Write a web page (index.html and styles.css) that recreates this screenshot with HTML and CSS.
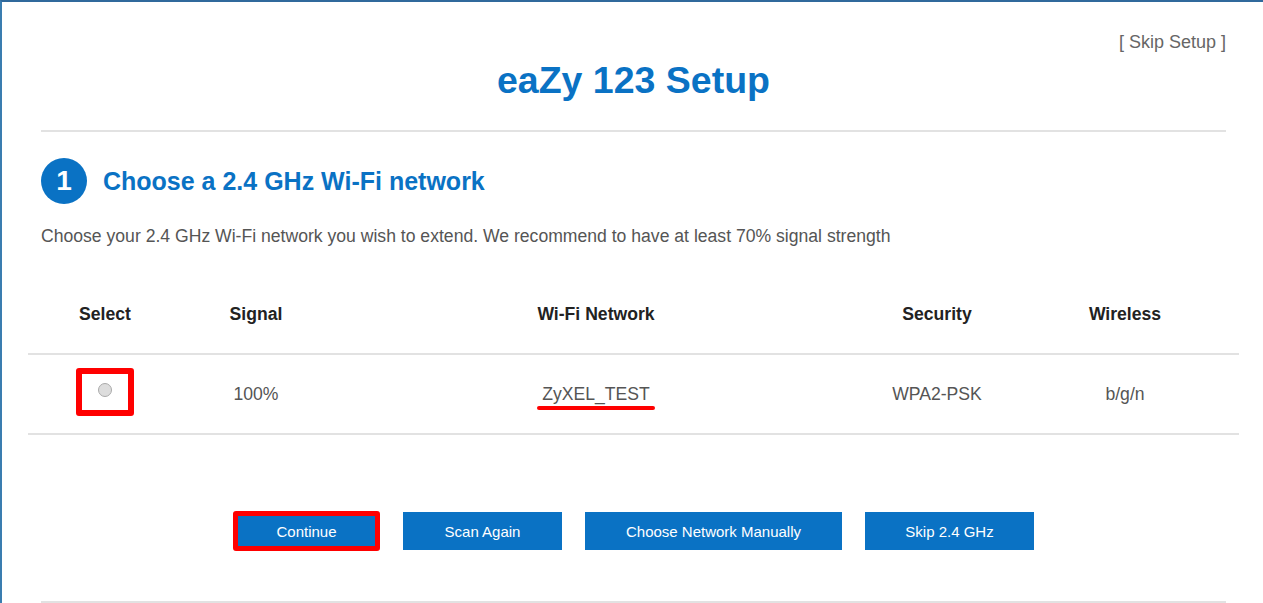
FILE: index.html
```html
<!DOCTYPE html>
<html>
<head>
  <title>eaZy 123 Setup</title>
  <link rel="stylesheet" href="styles.css">
</head>
<body>
  <div class="frame">
    <div class="skip-link">[ Skip Setup ]</div>
    <h1 class="title">eaZy 123 Setup</h1>
    <div class="divider"></div>

    <div class="step">
      <span class="step-num">1</span>
      <h2 class="step-title">Choose a 2.4 GHz Wi-Fi network</h2>
    </div>
    <p class="hint">Choose your 2.4 GHz Wi-Fi network you wish to extend. We recommend to have at least 70% signal strength</p>

    <div class="net-table">
      <div class="net-row net-head">
        <div>Select</div>
        <div>Signal</div>
        <div>Wi-Fi Network</div>
        <div>Security</div>
        <div>Wireless</div>
      </div>
      <div class="net-row">
        <div><span class="mark-box"><span class="radio"></span></span></div>
        <div>100%</div>
        <div><span class="ssid">ZyXEL_TEST</span></div>
        <div>WPA2-PSK</div>
        <div>b/g/n</div>
      </div>
    </div>

    <div class="actions">
      <button class="btn btn-marked">Continue</button>
      <button class="btn btn-scan">Scan Again</button>
      <button class="btn btn-manual">Choose Network Manually</button>
      <button class="btn btn-skip">Skip 2.4 GHz</button>
    </div>
    <div class="divider bottom"></div>
  </div>
</body>
</html>
```

FILE: styles.css
```css
body {
  margin: 0;
  font-family: "Liberation Sans", Arial, sans-serif;
  background: #fff;
  overflow: hidden;
}
.frame {
  border-top: 2px solid #30699c;
  border-left: 2px solid #3a7db0;
  height: 601px;
  padding: 0 37px 0 39px;
}
.skip-link {
  text-align: right;
  color: #666;
  font-size: 18px;
  line-height: 20px;
  padding-top: 30px;
}
.title {
  margin: 7px 0 0;
  text-align: center;
  color: #0a72c4;
  font-size: 37.5px;
  line-height: 42px;
  font-weight: bold;
}
.divider {
  height: 2px;
  background: #e2e2e2;
  margin-top: 29px;
}
.divider.bottom {
  margin-top: 50px;
}
.step {
  display: flex;
  align-items: center;
  gap: 16px;
  margin-top: 26px;
}
.step-num {
  width: 46px;
  height: 46px;
  border-radius: 50%;
  background: #0a72c4;
  color: #fff;
  font-size: 28px;
  font-weight: bold;
  display: flex;
  align-items: center;
  justify-content: center;
}
.step-title {
  margin: 0;
  color: #0a72c4;
  font-size: 25px;
  font-weight: bold;
}
.hint {
  margin: 22px 0 0;
  color: #555;
  font-size: 17.6px;
  line-height: 20px;
}
.net-table {
  margin: 29px -13px 0;
}
.net-row {
  display: grid;
  grid-template-columns: 154px 148px 532px 150px 226px;
  align-items: center;
  height: 78px;
  border-bottom: 2px solid #e2e2e2;
  text-align: center;
  color: #555;
  font-size: 17.6px;
}
.net-head {
  color: #222;
  font-weight: bold;
}
.mark-box {
  display: inline-flex;
  align-items: center;
  justify-content: center;
  width: 58px;
  height: 48px;
  box-sizing: border-box;
  border: 6px solid #f00;
  border-radius: 3px;
  margin-top: -4px;
}
.radio {
  width: 12px;
  height: 12px;
  border-radius: 50%;
  border: 1px solid #aaa;
  background: #ddd;
  margin-top: -4px;
}
.ssid {
  position: relative;
  padding: 0 5px;
}
.ssid::after {
  content: "";
  position: absolute;
  left: 0;
  right: 0;
  bottom: -6px;
  height: 4px;
  border-radius: 2px;
  background: #f00;
}
.actions {
  display: flex;
  justify-content: center;
  align-items: center;
  gap: 23px;
  margin-top: 76px;
}
.btn {
  height: 38px;
  border: 0;
  background: #0a72c4;
  color: #fff;
  font-family: "Liberation Sans", Arial, sans-serif;
  font-size: 15px;
  padding: 0;
}
.btn-marked {
  width: 147px;
  height: 40px;
  border: 5px solid #f00;
  border-radius: 3px;
}
.btn-scan { width: 159px; }
.btn-manual { width: 257px; }
.btn-skip { width: 169px; }
```
